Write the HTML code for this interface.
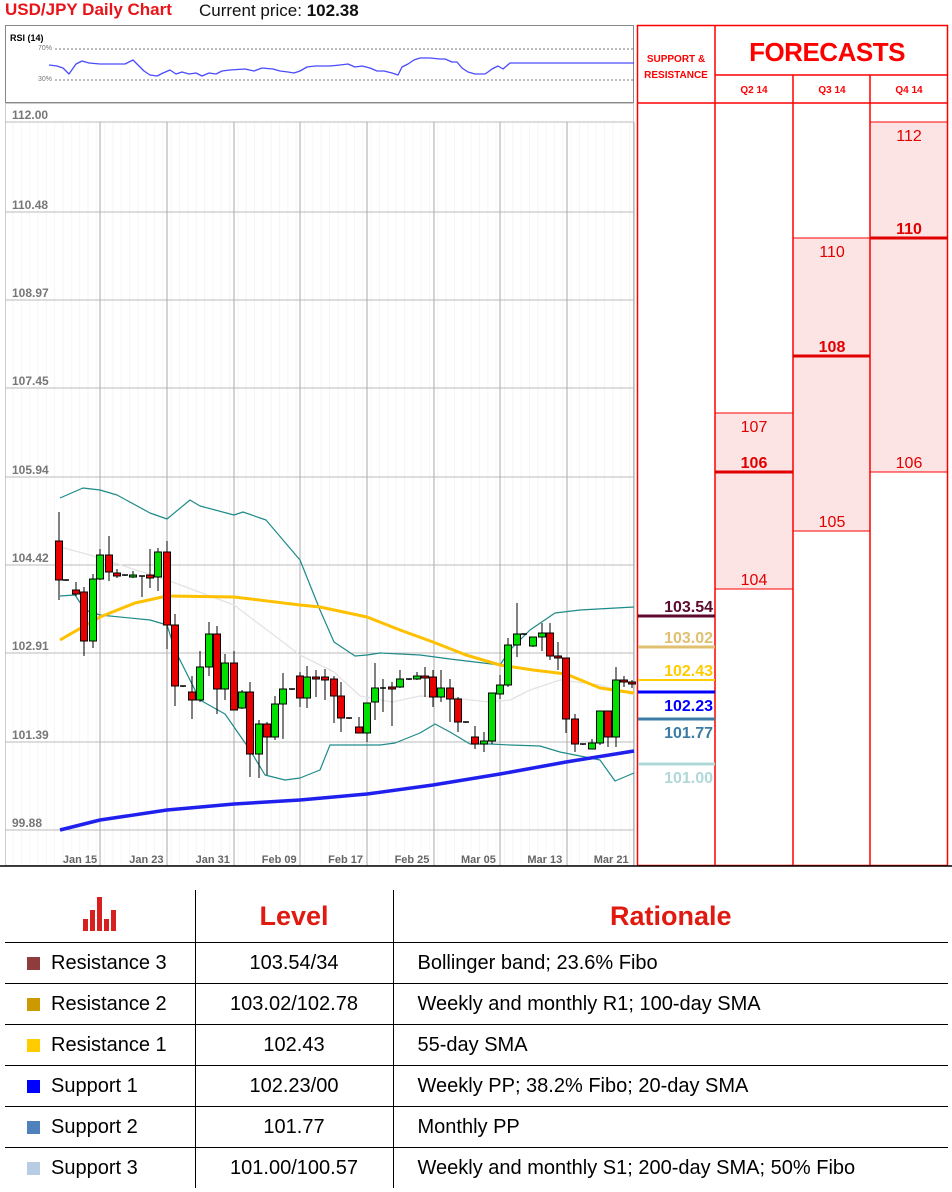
<!DOCTYPE html>
<html><head><meta charset="utf-8"><style>
body{margin:0;width:952px;height:1192px;background:#fff;position:relative;overflow:hidden;font-family:"Liberation Sans",sans-serif}
svg{position:absolute;left:0;top:0}
.t{position:absolute;white-space:nowrap}
table{position:absolute;left:5px;top:890px;border-collapse:collapse;width:943px;table-layout:fixed}
td{height:40px;border-top:1.5px solid #000;font-size:20px;color:#000;padding:0;white-space:nowrap}
td.c2{border-left:1.5px solid #000;text-align:center}
td.c3{border-left:1.5px solid #000;padding-left:24px}
td.c1{padding-left:22px}
.sq{display:inline-block;width:13px;height:13px;margin-right:11px;vertical-align:-1px}
tr.h td{border-top:none;height:52px;color:#e01a10;font-weight:bold;font-size:27px;text-align:center}
</style></head><body>
<div class="t" style="left:5px;top:0;font-size:17px;font-weight:bold;color:#e8141a">USD/JPY Daily Chart</div>
<div class="t" style="left:199px;top:1px;font-size:17px;color:#111">Current price: <b>102.38</b></div>
<svg id="s" width="952" height="880" viewBox="0 0 952 880"></svg>
<div class="t" style="left:10px;top:33px;font-size:9px;font-weight:bold">RSI (14)</div>
<div class="t" style="left:38px;top:45px;font-size:7px;color:#777">70%</div>
<div class="t" style="left:38px;top:76px;font-size:7px;color:#777">30%</div>
<table>
<colgroup><col style="width:190px"><col style="width:198px"><col></colgroup>
<tr class="h"><td class="c1" style="border-top:none;text-align:left;padding-left:78px"><svg width="36" height="36" style="position:relative" viewBox="0 0 36 36"><g fill="#d8211e"><rect x="0" y="24" width="5" height="12"/><rect x="7" y="15" width="5" height="21"/><rect x="14" y="2" width="5" height="34"/><rect x="21" y="24" width="5" height="12"/><rect x="28" y="15" width="5" height="21"/></g></svg></td><td class="c2" style="border-top:none;color:#e01a10;font-size:27px">Level</td><td class="c3" style="border-top:none;text-align:center;padding-left:0;color:#e01a10;font-size:27px">Rationale</td></tr>
<tr><td class="c1"><span class="sq" style="background:#8f3c3c"></span>Resistance 3</td><td class="c2">103.54/34</td><td class="c3">Bollinger band; 23.6% Fibo</td></tr>
<tr><td class="c1"><span class="sq" style="background:#cc9900"></span>Resistance 2</td><td class="c2">103.02/102.78</td><td class="c3">Weekly and monthly R1; 100-day SMA</td></tr>
<tr><td class="c1"><span class="sq" style="background:#ffcc00"></span>Resistance 1</td><td class="c2">102.43</td><td class="c3">55-day SMA</td></tr>
<tr><td class="c1"><span class="sq" style="background:#0000ff"></span>Support 1</td><td class="c2">102.23/00</td><td class="c3">Weekly PP; 38.2% Fibo; 20-day SMA</td></tr>
<tr><td class="c1"><span class="sq" style="background:#4f81bd"></span>Support 2</td><td class="c2">101.77</td><td class="c3">Monthly PP</td></tr>
<tr><td class="c1"><span class="sq" style="background:#b8cce4"></span>Support 3</td><td class="c2">101.00/100.57</td><td class="c3">Weekly and monthly S1; 200-day SMA; 50% Fibo</td></tr>
</table>
<script>
var s=document.getElementById('s'),h='';
function L(x1,y1,x2,y2,c,w,d){h+='<line x1="'+x1+'" y1="'+y1+'" x2="'+x2+'" y2="'+y2+'" stroke="'+c+'" stroke-width="'+(w||1)+'"'+(d?' stroke-dasharray="'+d+'"':'')+'/>';}
function P(pts,c,w){h+='<polyline fill="none" stroke="'+c+'" stroke-width="'+w+'" stroke-linejoin="round" points="'+pts+'"/>';}
function T(x,y,t,st){h+='<text x="'+x+'" y="'+y+'" style="'+st+'">'+t+'</text>';}
h+='<rect x="5.5" y="25.5" width="628" height="77" fill="#fff" stroke="#888"/>';
L(55,49,634,49,'#777',1,'2,2');L(55,80,634,80,'#777',1,'2,2');
P('49,65 57,66 63,68 69,74 76,64 82,61 89,63 100,64 125,64 133,60 138,65 144,71 150,75 157,76 163,73 170,70 176,74 182,72 189,74 196,73 202,76 209,73 216,74 222,71 230,70 245,69 254,71 262,68 273,69 280,71 288,72 294,73 300,71 307,67 315,66 330,66 340,65 348,64 355,67 362,66 370,68 377,71 384,71 392,73 398,75 402,67 408,64 414,60 420,58 430,58 440,59 445,59 452,62 457,62 462,68 468,72 475,74 485,74 488,72 492,69 498,66 503,69 510,63 518,63 634,63','#4a4aff',1.3);
h+='<rect x="5.5" y="103.5" width="628" height="762" fill="#fff" stroke="#ccc"/>';
for(var x=13;x<634;x+=8.33)L(x,122,x,866,'#f6f6f6');
var gy=[122,212,300,388,477,565,653,742,830],gl=['112.00','110.48','108.97','107.45','105.94','104.42','102.91','101.39','99.88'];
gy.forEach(function(y,i){L(5,y,634,y,'#bbb');});
[100,167,234,300,367,434,500,567].forEach(function(x){L(x,122,x,866,'#aaa');});
L(634,122,634,866,'#aaa');
P('60,498 83,488 100,490 117,495 150,513 167,519 190,500 200,506 234,515 243,512 266,520 300,560 320,610 334,642 355,656 367,655 380,653 420,655 450,659 475,662 500,665 510,650 530,630 555,613 580,610 634,607','#1e8a8a',1.2);
P('60,547 90,555 167,580 234,605 300,655 334,672 360,696 392,702 420,696 450,697 470,700 490,702 510,700 530,690 560,680 600,685 634,695','#e3e3e3',1.3);
P('60,596 75,595 85,610 100,615 150,620 167,625 175,650 200,700 225,714 250,750 265,775 285,780 300,778 320,770 330,745 345,745 380,745 395,743 420,733 435,724 450,732 470,744 490,744 510,745 540,746 560,752 600,760 615,781 634,773','#1e8a8a',1.2);
P('60,640 100,617 135,603 167,596 234,597 300,605 320,607 367,617 400,630 433,642 466,655 500,665 533,670 566,674 600,688 634,693','#ffc000',3);
P('60,830 100,820 167,810 234,804 300,800 367,794 433,785 500,774 566,762 634,751','#2020ee',3.5);
var C=[[59,541,580,512,600,'r'],[66,580,581,580,581,'d'],[76,590,594,582,596,'r'],[84,592,641,587,656,'r'],[93,641,579,574,648,'g'],[100,579,555,549,580,'g'],[109,555,572,536,581,'r'],[117,573,576,569,578,'r'],[125,575,576,575,576,'d'],[133,577,575,571,578,'g'],[142,576,577,576,597,'d'],[150,575,578,549,588,'r'],[158,577,552,548,591,'g'],[167,552,625,541,649,'r'],[175,625,686,614,706,'r'],[183,686,687,686,687,'d'],[192,692,700,676,719,'r'],[200,700,667,651,702,'g'],[209,667,634,622,676,'g'],[217,634,689,626,714,'r'],[225,689,663,654,700,'g'],[234,663,710,651,710,'r'],[242,708,692,690,709,'g'],[250,692,754,682,777,'r'],[259,754,724,720,778,'g'],[267,724,737,722,775,'r'],[275,737,704,696,740,'g'],[283,704,689,673,739,'g'],[292,689,690,689,690,'d'],[300,676,698,672,707,'r'],[307,698,677,666,708,'g'],[316,677,679,670,697,'r'],[325,677,680,669,700,'r'],[334,679,696,676,723,'r'],[341,696,718,682,732,'r'],[349,718,719,718,719,'d'],[359,727,733,717,733,'r'],[367,733,703,703,742,'g'],[375,702,688,663,720,'g'],[383,688,689,679,712,'d'],[392,687,689,682,726,'r'],[400,687,679,670,688,'g'],[409,679,680,679,680,'d'],[417,679,676,672,680,'g'],[425,676,678,667,697,'r'],[433,677,697,670,707,'r'],[441,697,688,670,702,'g'],[450,688,699,679,722,'r'],[458,699,722,697,732,'r'],[466,722,723,722,723,'d'],[475,737,744,726,749,'r'],[484,744,741,732,752,'g'],[492,741,693,693,744,'g'],[500,694,685,675,699,'g'],[508,685,645,638,687,'g'],[517,645,634,603,657,'g'],[524,634,635,634,635,'d'],[533,646,637,637,647,'g'],[542,637,633,623,651,'g'],[550,633,656,623,660,'r'],[558,656,658,642,670,'r'],[566,658,719,658,733,'r'],[575,719,744,714,752,'r'],[583,744,745,744,745,'d'],[592,749,743,739,749,'g'],[600,743,711,711,745,'g'],[608,711,737,711,747,'r'],[616,737,680,667,747,'g'],[624,680,682,676,687,'r'],[632,682,684,680,688,'r']];
C.forEach(function(c){L(c[0],c[3],c[0],c[4],'#000');var t=Math.min(c[1],c[2]),b=Math.max(c[1],c[2]);
if(c[5]=='d'){L(c[0]-3,t,c[0]+3,t,'#000',1.5);return;}
h+='<rect x="'+(c[0]-3.5)+'" y="'+t+'" width="7" height="'+Math.max(b-t,2)+'" fill="'+(c[5]=='g'?'#00e000':'#e80000')+'" stroke="#000" stroke-width="1"/>';});
gy.forEach(function(y,i){T(12,y-3,gl[i],'font-size:12px;fill:#777;font-weight:bold');});
['Jan 15','Jan 23','Jan 31','Feb 09','Feb 17','Feb 25','Mar 05','Mar 13','Mar 21'].forEach(function(t,i){T(80+i*66.4,863,t,'font-size:11px;fill:#666;font-weight:bold;text-anchor:middle');});
h+='<rect x="793" y="238" width="77" height="293" fill="#fde4e4"/><rect x="715" y="413" width="78" height="176" fill="#fde4e4"/><rect x="870" y="122" width="77" height="350" fill="#fde4e4"/>';
var R='#ff0000';
h+='<rect x="637.5" y="25.5" width="310" height="840" fill="none" stroke="'+R+'" stroke-width="1.5"/>';
L(715,25,715,866,R,1.5);L(793,75,793,866,R,1.5);L(870,75,870,866,R,1.5);L(715,75,948,75,R,1.5);L(637,103,948,103,R,1.5);
L(870,122,948,122,R,1);L(793,238,870,238,R,1);L(793,531,870,531,R,1);L(715,413,793,413,R,1);L(715,589,793,589,R,1);L(870,472,948,472,R,1);
L(870,238,948,238,'#e00000',3);L(793,356,870,356,'#e00000',3);L(715,472,793,472,'#e00000',3);
L(0,866,952,866,'#000',1.5);
T(676,62,'SUPPORT &amp;','font-size:10px;font-weight:bold;fill:'+R+';text-anchor:middle');
T(676,78,'RESISTANCE','font-size:10px;font-weight:bold;fill:'+R+';text-anchor:middle');
T(827,61,'FORECASTS','font-size:26px;font-weight:bold;fill:'+R+';text-anchor:middle;letter-spacing:-0.5px');
T(754,93,'Q2 14','font-size:10px;font-weight:bold;fill:'+R+';text-anchor:middle');
T(832,93,'Q3 14','font-size:10px;font-weight:bold;fill:'+R+';text-anchor:middle');
T(909,93,'Q4 14','font-size:10px;font-weight:bold;fill:'+R+';text-anchor:middle');
var f='font-size:16px;fill:#e00000;text-anchor:middle',fb='font-size:16px;font-weight:bold;fill:#e00000;text-anchor:middle';
T(909,141,'112',f);T(909,234,'110',fb);T(909,468,'106',f);
T(832,257,'110',f);T(832,352,'108',fb);T(832,527,'105',f);
T(754,432,'107',f);T(754,468,'106',fb);T(754,585,'104',f);
var S=[[616,'103.54','#5c0a2e',3,0],[647,'103.02','#e0c070',3,0],[680,'102.43','#ffcc00',2,0],[692,'102.23','#0000ff',3,1],[719,'101.77','#3a7ca5',3,1],[764,'101.00','#b0d8d8',3,1]];
S.forEach(function(a){L(638,a[0],715,a[0],a[2],a[3]);T(713,a[4]?a[0]+19:a[0]-4,a[1],'font-size:16px;font-weight:bold;fill:'+a[2]+';text-anchor:end');});
s.innerHTML=h;
</script>
</body></html>
